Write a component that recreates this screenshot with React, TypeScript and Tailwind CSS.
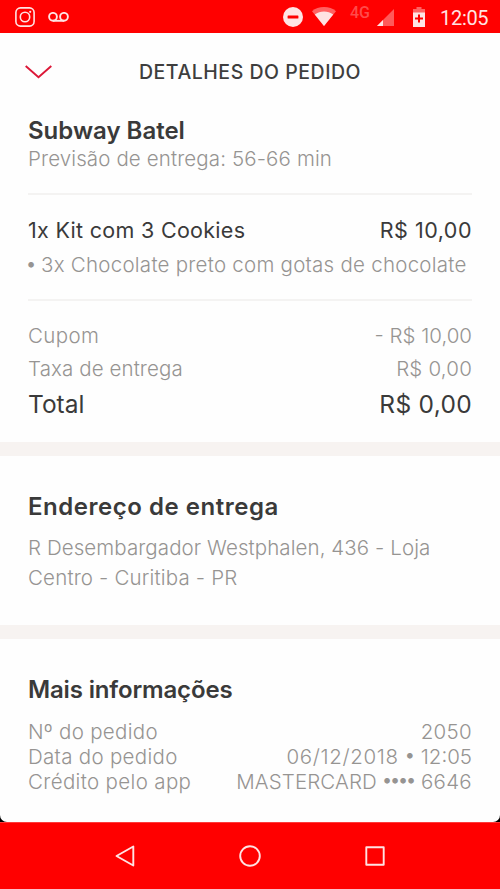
import type { ReactNode } from 'react'

const infoRows: { label: ReactNode; value: ReactNode }[] = [
  {
    label: <span className="tracking-[0.3px]">Nº do pedido</span>,
    value: <span className="tracking-[0.3px]">2050</span>,
  },
  {
    label: <span className="tracking-[0.3px]">Data do pedido</span>,
    value: (
      <>
        <span className="tracking-[0.65px]">06/12/2018</span>
        <span className="w-[22px] text-center text-[18px] leading-[22px] font-normal">•</span>
        <span>12:05</span>
      </>
    ),
  },
  {
    label: <span className="tracking-[0.35px]">Crédito pelo app</span>,
    value: (
      <>
        <span className="tracking-[0.1px]">MASTERCARD</span>
        <span className="mr-[9px] ml-[5px] w-[30px] text-[18px] leading-[22px] font-normal tracking-[-2.1px]">••••</span>
        <span className="tracking-[0.3px]">6646</span>
      </>
    ),
  },
]

function StatusBar() {
  return (
    <header className="flex h-[33px] items-center bg-[#ff0000] pr-[11px] pl-[15px] text-[#ffe3e3]">
      <svg className="h-5 w-5" viewBox="0 0 20 20" fill="none" stroke="currentColor" strokeWidth="1.6">
        <rect x="0.9" y="0.9" width="18.2" height="18.2" rx="4.6" />
        <circle cx="10" cy="10" r="4.7" />
        <circle cx="15.2" cy="4.8" r="1.1" fill="currentColor" stroke="none" />
      </svg>
      <svg className="ml-[13px] h-[10px] w-[21px]" viewBox="0 0 21 10" fill="none" stroke="currentColor" strokeWidth="1.9">
        <circle cx="5" cy="4.8" r="3.9" />
        <circle cx="16" cy="4.8" r="3.9" />
        <path d="M5 8.8h11" />
      </svg>

      <svg className="ml-auto h-5 w-5" viewBox="0 0 20 20">
        <circle cx="10" cy="10" r="10" fill="currentColor" />
        <rect x="4.6" y="8.5" width="10.8" height="3" rx="0.5" fill="#ff0000" />
      </svg>
      <svg className="ml-[9px] h-[19px] w-6" viewBox="0 0 24 19">
        <path d="M12 19 0 4.2C3.2 1.4 7.4 0 12 0s8.8 1.4 12 4.2z" fill="#ff6262" />
        <path d="M12 19 2.8 7.6C5.5 5.5 8.6 4.6 12 4.6s6.5.9 9.2 3z" fill="currentColor" />
      </svg>
      <span className="mb-[7px] ml-[14px] w-[21px] font-[Roboto] text-[16px] leading-none font-medium whitespace-nowrap text-[#ff4a4a]">
        4G
      </span>
      <svg className="mt-[2px] ml-[6px] h-[17px] w-[17px]" viewBox="0 0 17 17">
        <path d="M17 0v17H0z" fill="#ff5a5a" />
        <path d="M6 11v6H0z" fill="currentColor" />
      </svg>
      <svg className="ml-[19px] h-5 w-3" viewBox="0 0 12 20">
        <path d="M3.5 0h5v2H12v5H0V2h3.5z" fill="#ff6262" />
        <path d="M0 5.5h12V20H0z" fill="currentColor" />
        <path d="M6 7.5v8M2 11.5h8" stroke="#ff0000" strokeWidth="2" />
      </svg>
      <span className="mt-[2px] ml-[15px] w-[49px] font-[Roboto] text-[20px] leading-none font-normal tracking-[-0.3px] whitespace-nowrap">
        12:05
      </span>
    </header>
  )
}

function NavigationBar() {
  return (
    <nav className="flex h-[67px] items-center justify-between border-t border-[#ff3a3a] bg-[#ff0000] px-[115px]">
      <svg className="h-[22px] w-5" viewBox="0 0 20 22" fill="none" stroke="#ffe3e3" strokeWidth="1.9" strokeLinejoin="round">
        <path d="M18.3 1.5v19L1.5 11z" />
      </svg>
      <svg className="h-[22px] w-[22px]" viewBox="0 0 22 22" fill="none" stroke="#ffe3e3" strokeWidth="1.9">
        <circle cx="11" cy="11" r="9.8" />
      </svg>
      <svg className="h-5 w-5" viewBox="0 0 20 20" fill="none" stroke="#ffe3e3" strokeWidth="1.9" strokeLinejoin="round">
        <rect x="1.3" y="1.3" width="17.4" height="17.4" />
      </svg>
    </nav>
  )
}

export default function App() {
  return (
    <div className="flex h-[889px] w-[500px] flex-col overflow-hidden bg-black font-[Inter,sans-serif] text-[20.5px] font-light whitespace-nowrap text-[#969492]">
      <StatusBar />

      <main className="h-[789px] rounded-b-[7px] bg-[#fefefe]">
        <div className="grid h-[78px] grid-cols-[114px_1fr_112px] items-center pl-[25px]">
          <svg className="h-[14px] w-[27px]" viewBox="0 0 27 14" fill="none" stroke="#dc1737" strokeWidth="1.9">
            <path d="M0.7 1 13.5 12.3 26.3 1" />
          </svg>
          <h1 className="text-[19.5px] leading-6 font-medium tracking-[0.52px] text-[#3e3e3e]">DETALHES DO PEDIDO</h1>
        </div>

        <section className="px-7 pt-1.5">
          <h2 className="text-[24px] leading-7 font-semibold text-[#3a3a3a]">Subway Batel</h2>
          <p className="leading-7 tracking-[0.12px]">Previsão de entrega: 56-66 min</p>

          <div className="mt-5 border-t-2 border-[#f4f3f2] pt-[19px]">
            <div className="flex justify-between text-[21.5px] leading-8 font-normal text-[#3a3a3a]">
              <span className="tracking-[0.3px]">1x Kit com 3 Cookies</span>
              <span className="tracking-[0.5px]">R$ 10,00</span>
            </div>
            <p className="mt-[3px] flex leading-8">
              <span className="w-[13px] -indent-[2px] text-[18px] leading-[29px] font-normal">•</span>
              <span className="tracking-[0.25px]">3x Chocolate preto com gotas de chocolate</span>
            </p>
          </div>

          <div className="mt-[18px] border-t-2 border-[#f4f3f2] pt-[18px]">
            <div className="flex justify-between leading-[33px]">
              <span className="tracking-[0.4px]">Cupom</span>
              <span>- R$ 10,00</span>
            </div>
            <div className="flex justify-between leading-[33px]">
              <span className="tracking-[0.1px]">Taxa de entrega</span>
              <span className="tracking-[0.2px]">R$ 0,00</span>
            </div>
            <div className="flex justify-between text-[24.5px] leading-[38px] font-normal text-[#3a3a3a]">
              <span>Total</span>
              <span className="tracking-[0.3px]">R$ 0,00</span>
            </div>
          </div>
        </section>

        <section className="mt-[19px] border-t-[14px] border-[#f7f3f1] px-7 pt-[33px]">
          <h2 className="text-[24px] leading-9 font-semibold tracking-[0.53px] text-[#3a3a3a]">Endereço de entrega</h2>
          <address className="mt-2 leading-[30px] tracking-[0.08px] not-italic">
            R Desembargador Westphalen, 436 - Loja
            <br />
            <span className="tracking-[0.17px]">Centro - Curitiba - PR</span>
          </address>
        </section>

        <section className="mt-8 border-t-[14px] border-[#f7f3f1] px-7 pt-[33px]">
          <h2 className="text-[24px] leading-9 font-semibold tracking-[-0.15px] text-[#3a3a3a]">Mais informações</h2>
          <div className="mt-[11px]">
            {infoRows.map((row, index) => (
              <div key={index} className="flex justify-between leading-[25px]">
                {row.label}
                <div className="flex">{row.value}</div>
              </div>
            ))}
          </div>
        </section>
      </main>

      <NavigationBar />
    </div>
  )
}
